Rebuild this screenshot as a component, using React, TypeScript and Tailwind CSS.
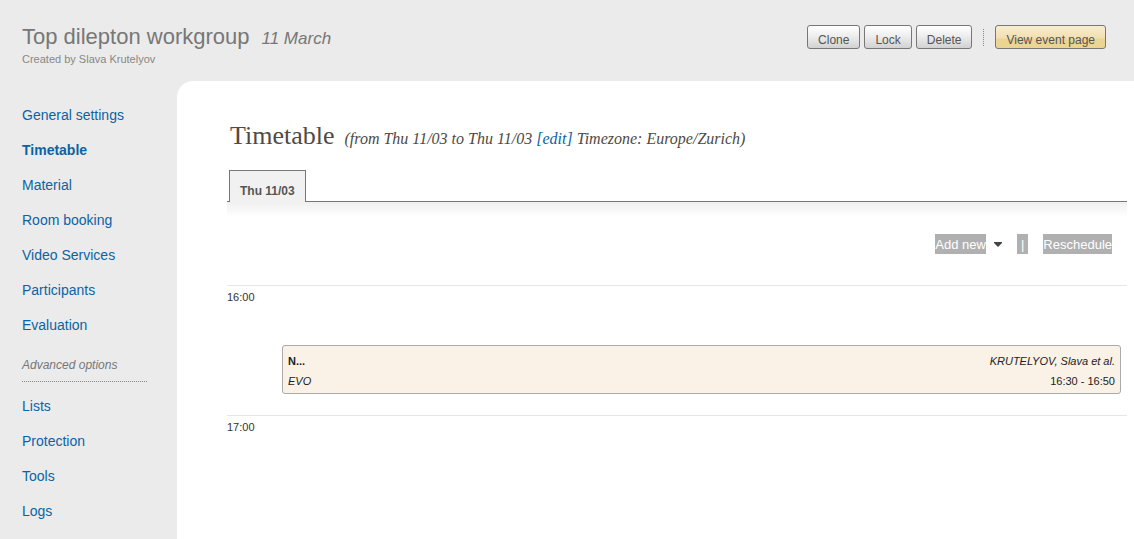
import React from "react";

const mainLinks = [
  "General settings",
  "Timetable",
  "Material",
  "Room booking",
  "Video Services",
  "Participants",
  "Evaluation",
];
const advancedLinks = ["Lists", "Protection", "Tools", "Logs"];
const actions = ["Clone", "Lock", "Delete"];

function NavList({ items, current }: { items: string[]; current?: string }) {
  return (
    <ul className="flex flex-col gap-[15px]">
      {items.map((item) => (
        <li key={item} className="text-[14px] leading-5">
          <a
            href="#"
            aria-current={item === current ? "page" : undefined}
            className={
              item === current
                ? "font-bold text-[#0b63a5]"
                : "text-[#0b63a5] hover:underline"
            }
          >
            {item}
          </a>
        </li>
      ))}
    </ul>
  );
}

function Header() {
  return (
    <header className="flex h-[81px] items-start justify-between pt-[25px] pr-7 pl-[22px]">
      <div>
        <h1 className="flex items-baseline gap-3 text-[22px] leading-6 text-[#777777]">
          Top dilepton workgroup
          <em className="text-[17px]">11 March</em>
        </h1>
        <p className="text-[11px] leading-4 text-[#888888]">
          Created by Slava Krutelyov
        </p>
      </div>
      <div className="flex items-center gap-1">
        {actions.map((action) => (
          <button
            key={action}
            type="button"
            className="h-6 rounded-[3px] border border-[#777777] bg-linear-to-b from-white from-0% via-[#eeeeee] via-45% to-[#d2d2d2] px-2.5 pt-1.5 text-[12px] leading-4 text-[#555555]"
          >
            {action}
          </button>
        ))}
        <div className="mx-[7px] h-[17px] border-l border-dotted border-[#888888]" />
        <button
          type="button"
          className="h-6 rounded-[3px] border border-[#777777] bg-linear-to-b from-[#f8edd0] from-0% via-[#f2dfb0] via-55% to-[#ecd493] to-60% px-2.5 pt-1.5 text-[12px] leading-4 text-[#555555]"
        >
          View event page
        </button>
      </div>
    </header>
  );
}

function Sidebar() {
  return (
    <nav aria-label="Event management" className="w-[177px] shrink-0 pt-6 pr-[30px] pl-[22px]">
      <NavList items={mainLinks} current="Timetable" />
      <h2 className="mt-[21px] mb-[14px] border-b border-dotted border-[#888888] pb-[7px] text-[12px] leading-[18px] text-[#777777] italic">
        Advanced options
      </h2>
      <NavList items={advancedLinks} />
    </nav>
  );
}

function Toolbar() {
  return (
    <div className="flex items-center justify-end pt-[17px] pr-[15px] text-[13px] leading-5 text-white">
      <button type="button" className="flex items-center gap-2">
        <span className="bg-[#b0b0b0] pt-0.5 leading-[18px]">Add new</span>
        <svg width="8" height="5" viewBox="0 0 8 5" aria-hidden="true">
          <path d="M0 0h8v1L4 5 0 1z" fill="#444444" />
        </svg>
      </button>
      <span className="mx-[15px] bg-[#b0b0b0] px-1 pt-0.5 leading-[18px]">|</span>
      <button type="button" className="bg-[#b0b0b0] pt-0.5 leading-[18px]">
        Reschedule
      </button>
    </div>
  );
}

function Hour({ label, children }: { label: string; children?: React.ReactNode }) {
  return (
    <section className="flex min-h-[130px] items-start border-t border-[#e6e6e6] pr-1.5">
      <h3 className="w-[55px] shrink-0 pt-[3px] text-[11px] leading-4 text-[#333333]">
        {label}
      </h3>
      {children}
    </section>
  );
}

export default function App() {
  return (
    <div className="flex min-h-screen flex-col bg-[#ebebeb] font-['Liberation_Sans',Arial,sans-serif]">
      <Header />
      <div className="flex flex-1">
        <Sidebar />
        <main className="min-w-0 flex-1 rounded-tl-[16px] bg-white pt-10 pr-[7px] pl-[50px]">
          <h2 className="flex flex-wrap items-baseline gap-x-2.5 pl-[3px] font-['Liberation_Serif','Times_New_Roman',serif] text-[26px] leading-[30px] text-[#4e4a44]">
            Timetable
            <em className="text-[16px]">
              (from Thu 11/03 to Thu 11/03{" "}
              <a href="#" className="text-[#0b63a5]">
                [edit]
              </a>{" "}
              Timezone: Europe/Zurich)
            </em>
          </h2>
          <div role="tablist" className="mt-4 flex border-b border-[#777777] pl-0.5">
            <button
              type="button"
              role="tab"
              aria-selected="true"
              className="-mb-px h-8 border border-b-0 border-[#777777] bg-[#f1f1f1] px-2.5 pt-2 text-[12px] font-bold text-[#555555]"
            >
              Thu 11/03
            </button>
          </div>
          <div className="bg-linear-to-b from-[#f0f0f0] to-white to-[15px]">
            <div className="pt-[15px] pb-[31px]">
              <Toolbar />
            </div>
            <Hour label="16:00">
              <article className="mt-[59px] flex min-w-0 flex-1 justify-between rounded-[3px] border border-[#aaaaaa] bg-[#faf1e7] px-[5px] pt-[5px] pb-0.5 text-[11px] leading-5 text-[#222222]">
                <div>
                  <h4 className="font-bold">N...</h4>
                  <p className="italic">EVO</p>
                </div>
                <div className="text-right">
                  <p className="italic">KRUTELYOV, Slava et al.</p>
                  <p>16:30 - 16:50</p>
                </div>
              </article>
            </Hour>
            <Hour label="17:00" />
          </div>
        </main>
      </div>
    </div>
  );
}
